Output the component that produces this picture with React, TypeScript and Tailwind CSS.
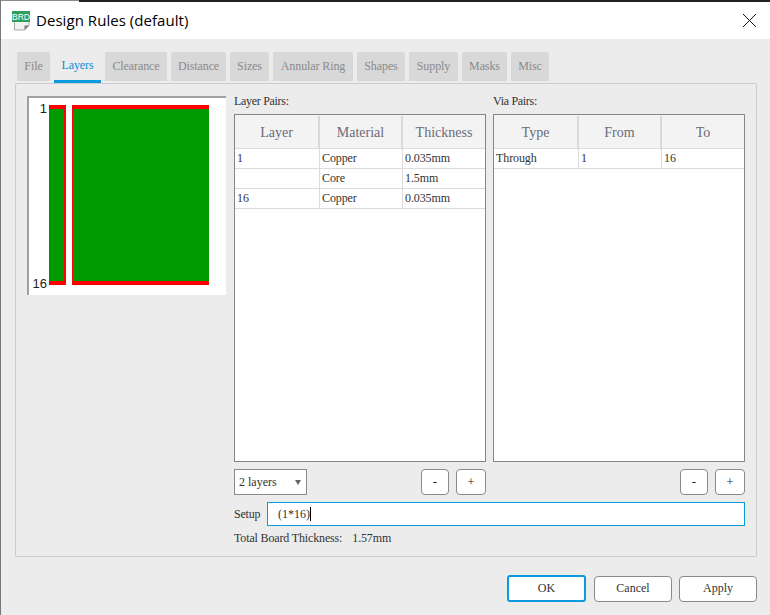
import { X } from 'lucide-react';

const tabs = [
  { label: 'File', width: 'w-[33px]' },
  { label: 'Layers', width: 'w-[47px]', active: true },
  { label: 'Clearance', width: 'w-[62px]' },
  { label: 'Distance', width: 'w-[55px]' },
  { label: 'Sizes', width: 'w-[39px]' },
  { label: 'Annular Ring', width: 'w-[80px]' },
  { label: 'Shapes', width: 'w-[48px]' },
  { label: 'Supply', width: 'w-[49px]' },
  { label: 'Masks', width: 'w-[45px]' },
  { label: 'Misc', width: 'w-[38px]' },
];

const serif = "font-['Liberation_Serif','Times_New_Roman',serif]";

function BrdIcon() {
  return (
    <svg width="18" height="20" viewBox="0 0 18 20" className="shrink-0">
      <path d="M2.5 1.5 H17 V14.5 L12.5 19 H2.5 Z" fill="#f2f2f2" stroke="#a8a8a8" />
      <path d="M12.5 19 V14.5 H17 Z" fill="#777777" />
      <rect x="0" y="0" width="18" height="11" fill="#2f9e5c" />
      <text x="9" y="8.8" textAnchor="middle" fontSize="8.5" fill="#ffffff" fontFamily="Liberation Sans, sans-serif">
        BRD
      </text>
    </svg>
  );
}

function PairsTable({ title, headers, rows }: { title: string; headers: string[]; rows: string[][] }) {
  return (
    <div className="flex w-[252px] flex-col">
      <div className="h-[18px] text-[12px] leading-[11px] tracking-[-0.3px] text-[#333333]">{title}</div>
      <div className="flex h-[348px] flex-col border border-[#85858c] bg-white">
        <div className="grid h-[34px] grid-cols-[85px_83px_82px] border-b border-[#dcdcdc] bg-[#f3f3f3] pt-px">
          {headers.map((header) => (
            <div
              key={header}
              className="flex items-center justify-center border-r-2 border-[#d8d8d8] text-[14px] text-[#6b6b78] last:border-r-0"
            >
              {header}
            </div>
          ))}
        </div>
        {rows.map((row, rowIndex) => (
          <div key={rowIndex} className="grid h-[20px] grid-cols-[85px_83px_82px] border-b border-[#dcdcdc]">
            {row.map((cell, cellIndex) => (
              <div
                key={cellIndex}
                className="flex items-center border-r border-[#dcdcdc] pb-[2px] pl-[2px] text-[12px] tracking-[-0.1px] text-[#333333] last:border-r-0"
              >
                {cell}
              </div>
            ))}
          </div>
        ))}
      </div>
    </div>
  );
}

function SmallButton({ label }: { label: string }) {
  return (
    <button className="flex h-[26px] items-center justify-center rounded-[4px] border border-[#8a8a8a] bg-white text-[13px] text-[#222222] first:w-[28px] last:w-[30px]">
      {label}
    </button>
  );
}

function TableActions() {
  return (
    <div className="flex gap-[7px]">
      <SmallButton label="-" />
      <SmallButton label="+" />
    </div>
  );
}

function LayerPreview() {
  return (
    <div className="flex h-[199px] w-[199px] shrink-0 border-t-2 border-l-2 border-[#a0a0a0] bg-white pt-[3px]">
      <div className="flex h-[190px] w-[20px] flex-col justify-between pr-[2px] pt-px font-['Liberation_Sans',sans-serif] text-[13px] leading-[14px] text-[#222222]">
        <span className="text-right">1</span>
        <span className="text-right">16</span>
      </div>
      <div className="mt-[4px] flex h-[180px] w-[17px] border-y-4 border-r-2 border-[#ff0000]">
        <div className="flex-1 bg-[#009900]" />
      </div>
      <div className="ml-[6px] mt-[4px] flex h-[180px] w-[137px] border-y-4 border-l border-[#ff0000]">
        <div className="flex-1 bg-[#009900]" />
      </div>
    </div>
  );
}

export default function App() {
  return (
    <div className={`flex h-[615px] w-[770px] flex-col overflow-hidden border-l border-[#77777c] bg-[#ececec] ${serif}`}>
      {/* window chrome behind the dialog */}
      <div className="flex h-[2px] shrink-0 bg-white">
        <div className="h-px w-[78px] bg-[#8a8a8a]" />
        <div className="flex-1 bg-[#222222]" />
      </div>

      <div className="flex h-[37px] shrink-0 items-center bg-white pl-[11px] pr-[8px]">
        <BrdIcon />
        <span className="mb-px ml-[6px] font-['Open_Sans',sans-serif] text-[15px] tracking-[0.05px] text-[#000000]">
          Design Rules (default)
        </span>
        <X size={25} strokeWidth={0.9} className="ml-auto text-black" />
      </div>

      <div className="ml-[14px] mt-[13px] flex h-[31px] shrink-0 gap-1 pl-[2px]">
        {tabs.map((tab) => (
          <div
            key={tab.label}
            className={
              tab.active
                ? `${tab.width} flex h-[31px] items-center justify-center border-b-[3px] border-[#0a9ade] pb-[2px] text-[12px] tracking-[-0.1px] text-[#0a8fd6]`
                : `${tab.width} flex h-[29px] items-center justify-center rounded-t-[2px] bg-[#d8d8d8] pb-px text-[12px] tracking-[-0.1px] text-[#8a8a8a]`
            }
          >
            {tab.label}
          </div>
        ))}
      </div>

      <div className="ml-[14px] flex h-[474px] w-[742px] shrink-0 gap-[8px] rounded-[2px] border border-t-0 border-[#cccccc] pl-[11px] pt-[13px] shadow-[inset_0_1px_0_#cccccc]">
        <LayerPreview />
        <div className="flex flex-col">
          <div className="flex gap-[7px]">
            <PairsTable
              title="Layer Pairs:"
              headers={['Layer', 'Material', 'Thickness']}
              rows={[
                ['1', 'Copper', '0.035mm'],
                ['', 'Core', '1.5mm'],
                ['16', 'Copper', '0.035mm'],
              ]}
            />
            <PairsTable title="Via Pairs:" headers={['Type', 'From', 'To']} rows={[['Through', '1', '16']]} />
          </div>

          <div className="mt-[7px] flex gap-[7px]">
            <div className="flex w-[252px] items-center justify-between">
              <div className="flex h-[26px] w-[73px] items-center justify-between border border-[#8a8a8a] bg-white pl-[4px] pr-[5px] text-[12px] text-[#333333]">
                2 layers
                <span className="h-0 w-0 border-x-[3px] border-t-[5px] border-x-transparent border-t-[#666666]" />
              </div>
              <TableActions />
            </div>
            <div className="flex w-[252px] items-center justify-end">
              <TableActions />
            </div>
          </div>

          <div className="mt-[7px] flex h-[24px] w-[511px] items-center">
            <span className="mb-px w-[33px] text-[12px] tracking-[-0.2px] text-[#333333]">Setup</span>
            <div className="flex h-full flex-1 items-center border border-[#0a9ade] bg-white pb-px pl-[10px] text-[12px] text-[#333333]">
              (1*16)
              <span className="h-[14px] w-px bg-black" />
            </div>
          </div>

          <div className="mt-[5px] flex h-[14px] items-center text-[12px] tracking-[-0.15px] text-[#333333]">
            <span>Total Board Thickness:</span>
            <span className="ml-[10px]">1.57mm</span>
          </div>
        </div>
      </div>

      <div className="mr-[13px] mt-[18px] flex justify-end gap-[7px] text-[12px] text-[#333333]">
        <button className="mr-px h-[27px] w-[79px] rounded-[3px] border-2 border-[#0a9ade] bg-white pb-[2px]">OK</button>
        <button className="mt-px h-[26px] w-[78px] rounded-[4px] border border-[#8a8a8a] bg-white pb-[2px]">Cancel</button>
        <button className="mt-px h-[26px] w-[78px] rounded-[4px] border border-[#8a8a8a] bg-white pb-[2px]">Apply</button>
      </div>
    </div>
  );
}
